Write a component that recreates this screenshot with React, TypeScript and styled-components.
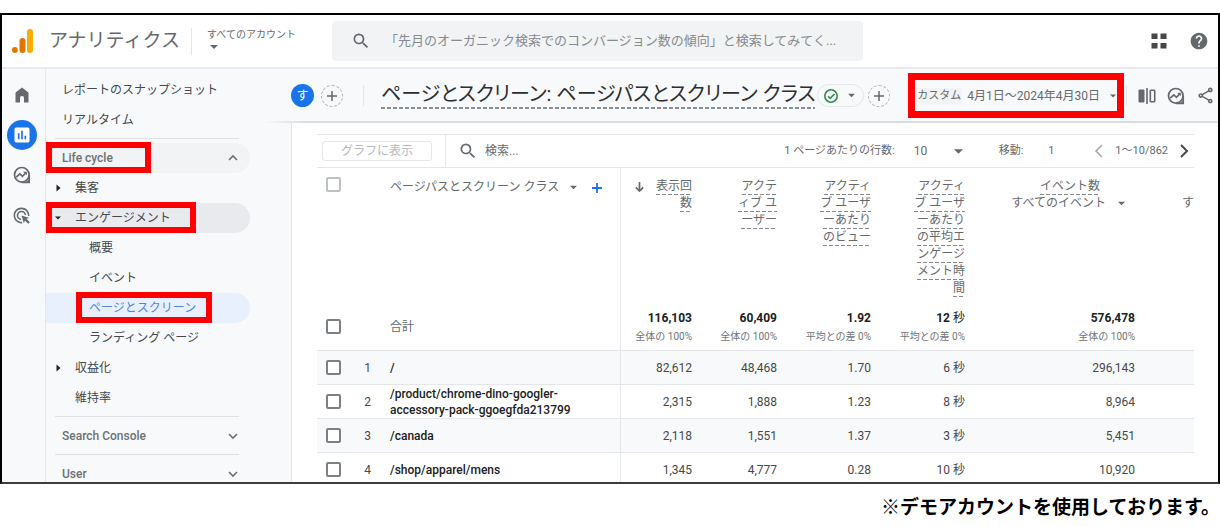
import React from "react";
import styled, { createGlobalStyle, css } from "styled-components";
import { MdAdsClick, MdHelp, MdOutlineShare, MdPoll, MdSearch } from "react-icons/md";

const color = {
  text: "#45484c",
  muted: "#65696e",
  soft: "#868b90",
  line: "#e4e6e9",
  panel: "#f8f9fa",
  blue: "#1a73e8",
  mark: "#ff0000",
};

const dashes = (shade: string, thickness: number) => css`
  background: repeating-linear-gradient(90deg, ${shade} 0 4px, transparent 4px 6px) left bottom / 100%
    ${thickness}px no-repeat;
`;

const GlobalStyle = createGlobalStyle`
  *, *::before, *::after { box-sizing: border-box; }
  body {
    margin: 0;
    background: #fff;
    color: ${color.text};
    font-family: Roboto, "Noto Sans CJK JP", sans-serif;
    font-size: 12px;
    line-height: 16px;
  }
  button, input, select { font: inherit; color: inherit; }
  button { border: 0; padding: 0; background: none; cursor: pointer; }
  a { color: inherit; text-decoration: none; }
  svg { display: block; flex: none; }
`;

/* Page shell */

const Page = styled.div`
  display: flex;
  flex-direction: column;
  height: 100vh;
  padding-top: 13px;
`;

const Frame = styled.div`
  display: flex;
  flex-direction: column;
  flex: 1;
  min-height: 0;
  overflow: hidden;
  border: 2px solid #000;
  border-bottom-color: #403c3e;
`;

const Caption = styled.p`
  margin: 0;
  padding: 12px 0 6px;
  text-align: right;
  font-size: 19px;
  line-height: 24px;
  font-weight: 700;
  color: #000;
`;

const Body = styled.div`
  display: flex;
  flex: 1;
  min-height: 0;
  background: ${color.panel};
`;

/* Top bar */

const TopBar = styled.header`
  display: flex;
  align-items: center;
  height: 54px;
  flex: none;
  padding: 0 9px 0 10px;
  border-bottom: 2px solid #e8eaec;
`;

const Brand = styled.a`
  display: flex;
  align-items: center;
  gap: 15px;
  width: 179px;
  font-size: 19px;
  line-height: 24px;
  color: ${color.muted};
`;

const AccountButton = styled.button`
  display: flex;
  flex-direction: column;
  align-items: flex-start;
  width: 141px;
  padding: 0 0 4px 15px;
  border-left: 1px solid ${color.line};
  font-size: 10px;
  line-height: 13px;
  color: ${color.muted};

  svg { margin: 2px 0 0 3px; }
`;

const SearchBox = styled.label`
  display: flex;
  align-items: center;
  gap: 14px;
  flex: 0 1 531px;
  height: 40px;
  padding: 0 6px 0 19px;
  border-radius: 4px;
  background: #f1f3f4;
  color: ${color.muted};
`;

const SearchInput = styled.input`
  flex: 1;
  min-width: 0;
  padding: 0;
  border: 0;
  outline: 0;
  background: none;
  font-size: 13px;
  line-height: 20px;

  &::placeholder { color: ${color.soft}; opacity: 1; }
`;

const TopActions = styled.div`
  display: flex;
  align-items: center;
  gap: 22px;
  margin-left: auto;
`;

const IconButton = styled.button`
  display: flex;
  color: ${color.muted};
`;

/* Icon rail */

const Rail = styled.nav`
  display: flex;
  flex-direction: column;
  align-items: center;
  gap: 10px;
  width: 44px;
  flex: none;
  padding: 11px 4px 0 0;
  border-right: 1px solid ${color.line};
`;

const RailLink = styled.a<{ $active?: boolean }>`
  display: flex;
  align-items: center;
  justify-content: center;
  width: 30px;
  height: 30px;
  border-radius: 50%;
  color: ${(p) => (p.$active ? "#fff" : color.muted)};
  background: ${(p) => (p.$active ? color.blue : "none")};
`;

/* Report navigation */

const SideNav = styled.nav`
  width: 245px;
  flex: none;
  padding: 6px 41px 0 0;
`;

const NavRule = styled.hr`
  height: 1px;
  margin: 3px 11px 4px 9px;
  border: 0;
  background: #dfe1e4;
`;

type Tone = "plain" | "open" | "current";
const toneFill: Record<Tone, string> = {
  plain: "none",
  open: "#e8eaed",
  current: "#e8f0fe",
};

const NavItem = styled.a<{ $indent: number; $tone?: Tone }>`
  position: relative;
  display: flex;
  align-items: center;
  height: 30px;
  padding-left: ${(p) => p.$indent}px;
  border-radius: 0 15px 15px 0;
  background: ${(p) => toneFill[p.$tone ?? "plain"]};
  color: ${(p) => (p.$tone === "current" ? "#5583dc" : color.text)};
`;

const NavArrow = styled.span`
  display: flex;
  justify-content: center;
  width: 8px;
  margin-right: 13px;
  color: #202124;
`;

const NavSection = styled.button<{ $filled?: boolean }>`
  position: relative;
  display: flex;
  align-items: center;
  justify-content: space-between;
  width: 100%;
  height: 30px;
  padding: 0 12px 0 16px;
  border-radius: 0 15px 15px 0;
  background: ${(p) => (p.$filled ? "#f1f3f4" : "none")};
  color: #6d7176;
  font-weight: 500;
`;

const Mark = styled.span<{ $left: number; $width: number }>`
  position: absolute;
  top: -1px;
  left: ${(p) => p.$left}px;
  width: ${(p) => p.$width}px;
  height: 31px;
  border: 6px solid ${color.mark};
  pointer-events: none;
`;

/* Report */

const Main = styled.main`
  display: flex;
  flex-direction: column;
  flex: 1;
  min-width: 0;
`;

const TitleBar = styled.div`
  position: relative;
  display: flex;
  align-items: center;
  height: 53px;
  flex: none;
  padding-right: 3px;

  &::after {
    content: "";
    position: absolute;
    left: -26px;
    right: 0;
    bottom: -1px;
    height: 2px;
    background: linear-gradient(90deg, transparent, #d9dbde 40px);
  }
`;

const Avatar = styled.span`
  display: grid;
  place-items: center;
  width: 23px;
  height: 23px;
  margin-right: 7px;
  border-radius: 50%;
  background: ${color.blue};
  color: #fff;
`;

const AddButton = styled.button`
  display: grid;
  place-items: center;
  flex: none;
  width: 22px;
  height: 22px;
  border: 1px dashed #b4b8bc;
  border-radius: 50%;
  color: ${color.muted};
`;

const Rule = styled.span<{ $before: number; $after: number }>`
  width: 1px;
  height: 21px;
  margin: 0 ${(p) => p.$after}px 0 ${(p) => p.$before}px;
  background: ${color.line};
`;

const Title = styled.h1`
  margin: 0;
  padding: 0 0 3px;
  font-size: 20px;
  line-height: 24px;
  font-weight: 400;
  font-feature-settings: "palt";
  white-space: nowrap;
  color: #2c2f33;
  ${dashes("#8a8d91", 2)}
`;

const StatusChip = styled.button`
  display: flex;
  align-items: center;
  gap: 9px;
  height: 23px;
  margin: 0 4px 0 2px;
  padding: 0 8px 0 5px;
  border: 1px solid ${color.line};
  border-radius: 12px;
  color: ${color.muted};
`;

const DateButton = styled.button`
  display: flex;
  align-items: center;
  gap: 5px;
  height: 45px;
  margin-left: auto;
  padding: 0 1px;
  border: 7px solid ${color.mark};
  white-space: nowrap;
  color: ${color.muted};

  svg { margin-left: 5px; }
`;

const DateTag = styled.span`
  padding: 0 1px;
  background: #f1f3f4;
  font-size: 11px;
`;

const ReportActions = styled.div`
  display: flex;
  align-items: center;
  gap: 11px;
`;

const Panel = styled.section`
  flex: 1;
  min-height: 0;
  overflow: hidden;
  padding: 12px 24px 0 25px;
  border-left: 1px solid ${color.line};
  background: #fff;
`;

const TableTools = styled.div`
  display: flex;
  align-items: center;
  height: 34px;
  border: solid ${color.line};
  border-width: 1px 0;
  color: ${color.muted};
`;

const PlotCell = styled.div`
  display: flex;
  align-items: center;
  align-self: stretch;
  padding: 0 13px 0 5px;
  border-right: 1px solid ${color.line};
`;

const PlotButton = styled.button`
  width: 110px;
  height: 20px;
  border: 1px solid ${color.line};
  border-radius: 3px;
  line-height: 18px;
  color: #b4b8bc;
`;

const TableSearch = styled.label`
  display: flex;
  align-items: center;
  gap: 7px;
  flex: 1;
  min-width: 0;
  padding-left: 12px;
`;

const PlainInput = styled.input`
  flex: 1;
  min-width: 0;
  padding: 0;
  border: 0;
  outline: 0;
  background: none;

  &::placeholder { color: ${color.muted}; opacity: 1; }
`;

const Pager = styled.div`
  display: flex;
  align-items: center;
  flex: none;
  padding-right: 5px;
  font-size: 11px;
`;

const PagerLabel = styled.label<{ $gap: number }>`
  display: flex;
  align-items: center;
  gap: ${(p) => p.$gap}px;
`;

const SelectShell = styled.span`
  display: grid;
  align-items: center;
  width: 49px;
  margin-right: 36px;

  > * { grid-area: 1 / 1; }
  > svg { justify-self: end; pointer-events: none; }
`;

const RowsSelect = styled.select`
  width: 100%;
  padding: 0;
  border: 0;
  appearance: none;
  background: none;
  font-size: 12px;
`;

const PageInput = styled.input`
  width: 46px;
  padding: 0;
  border: 0;
  background: none;
`;

const PagerStep = styled.button`
  display: flex;
  color: ${color.text};

  &:disabled { color: #a6aaae; }
`;

const PageRange = styled.span`
  margin: 0 12px;
`;

/* Data table */

const Table = styled.table`
  width: 100%;
  table-layout: fixed;
  border-collapse: separate;
  border-spacing: 0;
`;

const Col = styled.col<{ $w?: number }>`
  width: ${(p) => (p.$w ? `${p.$w}px` : "auto")};
`;

const divider = css<{ $ruled?: boolean }>`
  border-right: ${(p) => (p.$ruled ? `1px solid ${color.line}` : "0")};
`;

const Head = styled.th<{ $ruled?: boolean; $flush?: boolean }>`
  height: 135px;
  padding: 10px ${(p) => (p.$flush ? 0 : 10)}px 0 0;
  vertical-align: top;
  text-align: right;
  font-weight: 400;
  line-height: 17px;
  white-space: nowrap;
  color: ${color.muted};
  ${divider}
`;

const NameHead = styled(Head)`
  padding: 11px 0 0 9px;
  text-align: left;
`;

const CheckHead = styled(Head)`
  padding: 9px 0 0 9px;
  text-align: left;
`;

const HeadLine = styled.span`
  display: inline-block;
  height: 17px;
  line-height: 17px;
  vertical-align: top;
  ${dashes("#85898d", 1)}
`;

const NamePicker = styled.div`
  display: flex;
  align-items: center;
  gap: 11px;
`;

const AddDimension = styled.button`
  margin-left: 4px;
  color: ${color.blue};
`;

const SortedHead = styled.div`
  display: flex;
  justify-content: flex-end;
  align-items: flex-start;
  gap: 12px;
`;

const EventHead = styled.div`
  display: flex;
  flex-direction: column;
  align-items: flex-end;
`;

const EventTitle = styled.div`
  padding-right: 35px;
`;

const EventPicker = styled.button`
  display: flex;
  align-items: center;
  gap: 12px;
  padding-right: 10px;
`;

const Row = styled.tr<{ $shade?: boolean; $total?: boolean }>`
  height: ${(p) => (p.$total ? 48 : 34)}px;
  background: ${(p) => (p.$shade ? color.panel : "#fff")};
`;

const Cell = styled.td<{ $ruled?: boolean }>`
  padding: 0 10px 0 0;
  border-bottom: 1px solid ${color.line};
  text-align: right;
  white-space: nowrap;
  ${divider}
`;

const NameCell = styled(Cell)`
  padding: 0 20px 0 9px;
  text-align: left;
  font-weight: 500;
  white-space: normal;
  color: #202124;
`;

const TotalName = styled(NameCell)`
  font-weight: 400;
  color: ${color.muted};
`;

const CheckCell = styled(Cell)`
  padding: 0 0 0 9px;
  text-align: left;
`;

const Check = styled.input<{ $light?: boolean }>`
  display: block;
  appearance: none;
  width: 15px;
  height: 15px;
  margin: 0;
  border: 2px solid ${(p) => (p.$light ? "#bdc0c3" : "#7c8085")};
  border-radius: 2px;
  background: #fff;
`;

const TotalValue = styled.div`
  padding-top: 2px;
  line-height: 18px;
  color: #202124;
`;

const TotalNote = styled.div`
  font-size: 10px;
  line-height: 20px;
  color: #70757a;
`;

/* Icons */

const Caret = ({ size = 7 }: { size?: number }) => (
  <svg width={size} height={size} viewBox="0 0 8 8" fill="currentColor" aria-hidden>
    <path d="M0 2h8L4 6z" />
  </svg>
);

const CaretRight = () => (
  <svg width="6" height="8" viewBox="0 0 6 8" fill="currentColor" aria-hidden>
    <path d="M1.500 0.500v7L5.500 4z" />
  </svg>
);

const Chevron = ({ d, w = 10, h = 10, stroke = 1.6 }: { d: string; w?: number; h?: number; stroke?: number }) => (
  <svg width={w} height={h} viewBox={`0 0 ${w} ${h}`} fill="none" stroke="currentColor" strokeWidth={stroke} aria-hidden>
    <path d={d} />
  </svg>
);

const Plus = ({ size = 10, stroke = 1.5 }: { size?: number; stroke?: number }) => (
  <svg width={size} height={size} viewBox="0 0 10 10" fill="none" stroke="currentColor" strokeWidth={stroke} aria-hidden>
    <path d="M5 0v10M0 5h10" />
  </svg>
);

const Logo = () => (
  <svg width="22" height="26" viewBox="0 0 22 26" aria-hidden>
    <rect x="15" y="1" width="6" height="24" rx="3" fill="#f9ab00" />
    <rect x="7.500" y="10" width="6" height="15" rx="3" fill="#e37400" />
    <circle cx="2.900" cy="22" r="2.900" fill="#e37400" />
  </svg>
);

const HomeIcon = () => (
  <svg width="14" height="16" viewBox="0 0 14 16" fill="currentColor" aria-hidden>
    <path d="M7 .5.9 5.300Q.5 5.600.5 6.200V15.500H5v-4.500a2 2 0 0 1 4 0v4.500h4.500V6.200q0-.6-.4-.9z" />
  </svg>
);

const ExploreIcon = () => (
  <svg width="18" height="18" viewBox="0 0 18 18" fill="none" stroke="currentColor" strokeWidth="1.700" aria-hidden>
    <circle cx="8.800" cy="8.800" r="7.300" />
    <path d="M16.200 9v7.300H9" />
    <path d="M16.300 13v3.400h-3.400z" fill="currentColor" stroke="none" />
    <path d="M3.200 11.200 6.800 7.800l2.700 2.500 3.600-3.800" />
    <path d="M10.200 5.700h3.600v3.600z" fill="currentColor" stroke="none" />
  </svg>
);

const AppsIcon = () => (
  <svg width="16" height="16" viewBox="0 0 16 16" fill="#474747" aria-hidden>
    <path d="M.5.500h6v5.500h-6zM9.500.500h6v5.500h-6zM.5 10h6v5.500h-6zM9.500 10h6v5.500h-6z" />
  </svg>
);

const CompareIcon = () => (
  <svg width="18" height="16" viewBox="0 0 18 16" fill="currentColor" aria-hidden>
    <rect x="0.500" y="1.500" width="6" height="13" rx="1" />
    <rect x="8.200" y="0" width="1.600" height="16" />
    <rect x="12.300" y="2.300" width="4.400" height="11.400" rx=".5" fill="none" stroke="currentColor" strokeWidth="1.600" />
  </svg>
);

const VerifiedIcon = () => (
  <svg width="16" height="16" viewBox="0 0 16 16" fill="none" stroke="#2f8a4b" strokeWidth="1.600" aria-hidden>
    <circle cx="8" cy="8" r="6.200" />
    <path d="m5 8.200 2.200 2.200L11.500 6" />
  </svg>
);

const SortArrow = () => (
  <svg width="9" height="17" viewBox="0 0 9 17" fill="none" stroke="currentColor" strokeWidth="1.700" aria-hidden>
    <path d="M4.500 4v9M.8 9.300l3.700 3.700 3.700-3.700" />
  </svg>
);

/* Data */

const metricHeads = [
  ["アクテ", "ィブ ユ", "ーザー"],
  ["アクティ", "ブ ユーザ", "ーあたり", "のビュー"],
  ["アクティ", "ブ ユーザ", "ーあたり", "の平均エ", "ンゲージ", "メント時", "間"],
];

const totals = [
  { value: "116,103", unit: "", note: "全体の 100%" },
  { value: "60,409", unit: "", note: "全体の 100%" },
  { value: "1.92", unit: "", note: "平均との差 0%" },
  { value: "12", unit: " 秒", note: "平均との差 0%" },
  { value: "576,478", unit: "", note: "全体の 100%" },
];

const rows = [
  { path: "/", values: ["82,612", "48,468", "1.70", "6 秒", "296,143"] },
  { path: "/product/chrome-dino-googler-accessory-pack-ggoegfda213799", values: ["2,315", "1,888", "1.23", "8 秒", "8,964"] },
  { path: "/canada", values: ["2,118", "1,551", "1.37", "3 秒", "5,451"] },
  { path: "/shop/apparel/mens", values: ["1,345", "4,777", "0.28", "10 秒", "10,920"] },
];

const Lines = ({ lines }: { lines: string[] }) => (
  <div>
    {lines.map((line) => (
      <div key={line}>
        <HeadLine>{line}</HeadLine>
      </div>
    ))}
  </div>
);

const down = "M1 3l4 4 4-4";

const Sidebar = () => (
  <SideNav aria-label="レポート">
    <NavItem href="#snapshot" $indent={16}>レポートのスナップショット</NavItem>
    <NavItem href="#realtime" $indent={16}>リアルタイム</NavItem>
    <NavRule />
    <NavSection $filled>
      Life cycle
      <Chevron d="M1 7l4-4 4 4" />
      <Mark $left={0} $width={105} />
    </NavSection>
    <NavItem href="#acquisition" $indent={8}>
      <NavArrow><CaretRight /></NavArrow>集客
    </NavItem>
    <NavItem href="#engagement" $indent={8} $tone="open">
      <NavArrow><Caret size={6} /></NavArrow>エンゲージメント
      <Mark $left={0} $width={150} />
    </NavItem>
    <NavItem href="#overview" $indent={43}>概要</NavItem>
    <NavItem href="#events" $indent={43}>イベント</NavItem>
    <NavItem href="#pages" $indent={43} $tone="current">
      ページとスクリーン
      <Mark $left={30} $width={136} />
    </NavItem>
    <NavItem href="#landing" $indent={43}>ランディング ページ</NavItem>
    <NavItem href="#monetization" $indent={8}>
      <NavArrow><CaretRight /></NavArrow>収益化
    </NavItem>
    <NavItem href="#retention" $indent={29}>維持率</NavItem>
    <NavRule />
    <NavSection>Search Console<Chevron d={down} /></NavSection>
    <NavRule />
    <NavSection>User<Chevron d={down} /></NavSection>
  </SideNav>
);

const DataTable = () => (
  <Table>
    <colgroup>
      <Col $w={36} />
      <Col $w={28} />
      <Col />
      <Col $w={81} />
      <Col $w={85} />
      <Col $w={94} />
      <Col $w={94} />
      <Col $w={170} />
      <Col $w={49} />
    </colgroup>
    <thead>
      <tr>
        <CheckHead><Check type="checkbox" $light aria-label="すべて選択" /></CheckHead>
        <Head />
        <NameHead $ruled>
          <NamePicker>
            ページパスとスクリーン クラス
            <Caret />
            <AddDimension aria-label="追加"><Plus stroke={1.8} /></AddDimension>
          </NamePicker>
        </NameHead>
        <Head>
          <SortedHead>
            <SortArrow />
            <Lines lines={["表示回", "数"]} />
          </SortedHead>
        </Head>
        {metricHeads.map((lines) => (
          <Head key={lines.length}><Lines lines={lines} /></Head>
        ))}
        <Head>
          <EventHead>
            <EventTitle><HeadLine>イベント数</HeadLine></EventTitle>
            <EventPicker>すべてのイベント<Caret /></EventPicker>
          </EventHead>
        </Head>
        <Head $flush><br />す</Head>
      </tr>
    </thead>
    <tbody>
      <Row $total>
        <CheckCell><Check type="checkbox" aria-label="合計" /></CheckCell>
        <Cell />
        <TotalName $ruled>合計</TotalName>
        {totals.map(({ value, unit, note }) => (
          <Cell key={value}>
            <TotalValue><b>{value}</b>{unit}</TotalValue>
            <TotalNote>{note}</TotalNote>
          </Cell>
        ))}
        <Cell />
      </Row>
      {rows.map((row, i) => (
        <Row key={row.path} $shade={i % 2 === 0}>
          <CheckCell><Check type="checkbox" aria-label={row.path} /></CheckCell>
          <Cell>{i + 1}</Cell>
          <NameCell $ruled>{row.path}</NameCell>
          {row.values.map((value) => <Cell key={value}>{value}</Cell>)}
          <Cell />
        </Row>
      ))}
    </tbody>
  </Table>
);

export default function App() {
  return (
    <Page>
      <GlobalStyle />
      <Frame>
        <TopBar>
          <Brand href="#home"><Logo />アナリティクス</Brand>
          <AccountButton>すべてのアカウント<Caret size={8} /></AccountButton>
          <SearchBox>
            <MdSearch size={20} />
            <SearchInput
              aria-label="検索"
              placeholder="「先月のオーガニック検索でのコンバージョン数の傾向」と検索してみてく..."
            />
          </SearchBox>
          <TopActions>
            <IconButton aria-label="アプリ"><AppsIcon /></IconButton>
            <IconButton aria-label="ヘルプ"><MdHelp size={20} /></IconButton>
          </TopActions>
        </TopBar>
        <Body>
          <Rail aria-label="メイン">
            <RailLink href="#home" aria-label="ホーム"><HomeIcon /></RailLink>
            <RailLink href="#reports" aria-label="レポート" $active><MdPoll size={20} /></RailLink>
            <RailLink href="#explore" aria-label="探索"><ExploreIcon /></RailLink>
            <RailLink href="#ads" aria-label="広告"><MdAdsClick size={19} /></RailLink>
          </Rail>
          <Sidebar />
          <Main>
            <TitleBar>
              <Avatar>す</Avatar>
              <AddButton aria-label="比較を追加"><Plus /></AddButton>
              <Rule $before={20} $after={17} />
              <Title>ページとスクリーン: ページパスとスクリーン クラス</Title>
              <StatusChip aria-label="ステータス"><VerifiedIcon /><Caret /></StatusChip>
              <AddButton aria-label="フィルタを追加"><Plus /></AddButton>
              <DateButton>
                <DateTag>カスタム</DateTag>
                4月1日～2024年4月30日
                <Caret size={6} />
              </DateButton>
              <Rule $before={2} $after={11} />
              <ReportActions>
                <IconButton aria-label="比較"><CompareIcon /></IconButton>
                <IconButton aria-label="インサイト"><ExploreIcon /></IconButton>
                <IconButton aria-label="共有"><MdOutlineShare size={19} /></IconButton>
              </ReportActions>
            </TitleBar>
            <Panel>
              <TableTools>
                <PlotCell><PlotButton>グラフに表示</PlotButton></PlotCell>
                <TableSearch>
                  <MdSearch size={20} />
                  <PlainInput aria-label="表を検索" placeholder="検索..." />
                </TableSearch>
                <Pager>
                  <PagerLabel $gap={19}>
                    1 ページあたりの行数:
                    <SelectShell>
                      <RowsSelect defaultValue="10"><option>10</option></RowsSelect>
                      <Caret size={9} />
                    </SelectShell>
                  </PagerLabel>
                  <PagerLabel $gap={25}>
                    移動:
                    <PageInput defaultValue="1" />
                  </PagerLabel>
                  <PagerStep disabled aria-label="前へ"><Chevron w={9} h={14} d="M8 1L2 7l6 6" /></PagerStep>
                  <PageRange>1～10/862</PageRange>
                  <PagerStep aria-label="次へ"><Chevron w={9} h={14} stroke={2} d="M1 1l6 6-6 6" /></PagerStep>
                </Pager>
              </TableTools>
              <DataTable />
            </Panel>
          </Main>
        </Body>
      </Frame>
      <Caption>※デモアカウントを使用しております。</Caption>
    </Page>
  );
}
